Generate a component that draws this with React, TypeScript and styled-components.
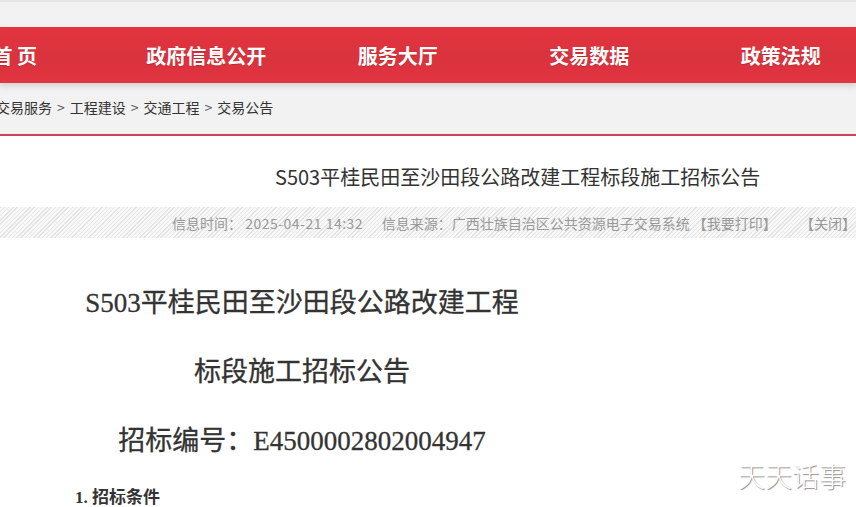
import React from "react";
import styled, { createGlobalStyle } from "styled-components";

const GlobalStyle = createGlobalStyle`
  html, body {
    margin: 0;
    padding: 0;
    background: #ffffff;
    overflow: hidden;
  }
  body {
    font-family: "Noto Sans CJK SC", "Noto Sans", sans-serif;
  }
`;

const Page = styled.div`
  position: relative;
  width: 856px;
  height: 507px;
  overflow: hidden;
  background: #ffffff;
`;

const Header = styled.header`
  background: #f2f2f2;
  border-top: 2px solid #e6e6e6;
  padding-top: 25px;
  border-bottom: 2px solid #c8465a;
  box-shadow: inset 0 -1px 0 #f6ecec;
`;

const NavBar = styled.nav`
  height: 56px;
  background: linear-gradient(180deg, #e3343f 0%, #d9333d 55%, #e23441 100%);
  box-shadow: 0 3px 6px rgba(0, 0, 0, 0.14);
  overflow: hidden;
`;

const NavList = styled.ul`
  display: grid;
  grid-template-columns: repeat(5, 191.5px);
  margin: 0 0 0 -81px;
  padding: 0;
  list-style: none;
  height: 100%;
`;

const NavItem = styled.li`
  display: flex;
  align-items: center;
  justify-content: center;
  color: #ffffff;
  font-size: 20px;
  font-weight: 700;
  white-space: pre;
  text-shadow: 0 1px 1px rgba(120, 0, 0, 0.25);
`;

const Crumbs = styled.div`
  height: 51px;
  padding-bottom: 3px;
  box-sizing: border-box;
  display: flex;
  align-items: center;
  margin-left: -4px;
  font-size: 14px;
  color: #333333;
  white-space: nowrap;
`;

const CrumbSep = styled.span`
  margin: 0 5px;
  color: #555555;
`;

const TitleRow = styled.h1`
  margin: 0;
  padding: 26px 0 15px 275px;
  font-size: 20px;
  line-height: 30px;
  font-weight: 400;
  color: #333333;
  white-space: nowrap;
`;

const MetaBar = styled.div`
  height: 31px;
  display: flex;
  align-items: center;
  padding-left: 172px;
  background: repeating-linear-gradient(
    135deg,
    #e4e4e4 0px,
    #e4e4e4 1px,
    #f8f8f8 1px,
    #f8f8f8 3px
  );
  font-size: 14px;
  color: #999999;
  white-space: pre;
  overflow: hidden;
`;

const MetaDate = styled.span`
  letter-spacing: 0.5px;
`;

const MetaGap = styled.span<{ $w: number }>`
  display: inline-block;
  width: ${(p) => p.$w}px;
`;

const Article = styled.article`
  margin-left: 75px;
  width: 454px;
  padding-top: 45px;
  font-family: "Liberation Serif", "Noto Sans CJK SC", serif;
  color: #333333;
`;

const Heading = styled.p<{ $gap: number }>`
  margin: 0 0 ${(p) => p.$gap}px;
  text-align: center;
  font-size: 27px;
  line-height: 40px;
  white-space: nowrap;
  -webkit-text-stroke: 0.3px #333333;
`;

const SubHeading = styled.p`
  margin: 0;
  font-size: 17px;
  line-height: 26px;
  font-weight: 700;
  white-space: nowrap;
`;

const Watermark = styled.div`
  position: absolute;
  right: 10px;
  top: 456px;
  font-size: 27px;
  font-weight: 300;
  color: #ffffff;
  text-shadow: 1px 1px 1px rgba(0, 0, 0, 0.45), -0.5px -0.5px 0 rgba(0, 0, 0, 0.08);
`;

const navItems = ["首 页", "政府信息公开", "服务大厅", "交易数据", "政策法规"];
const crumbs = ["交易服务", "工程建设", "交通工程", "交易公告"];

export default function App() {
  return (
    <Page>
      <GlobalStyle />
      <Header>
        <NavBar>
          <NavList>
            {navItems.map((item) => (
              <NavItem key={item}>{item}</NavItem>
            ))}
          </NavList>
        </NavBar>
        <Crumbs>
          {crumbs.map((c, i) => (
            <React.Fragment key={c}>
              {i > 0 && <CrumbSep>&gt;</CrumbSep>}
              <span>{c}</span>
            </React.Fragment>
          ))}
        </Crumbs>
      </Header>
      <TitleRow>S503平桂民田至沙田段公路改建工程标段施工招标公告</TitleRow>
      <MetaBar>
        <span>信息时间： </span>
        <MetaDate>2025-04-21 14:32</MetaDate>
        <MetaGap $w={20} />
        <span>信息来源：广西壮族自治区公共资源电子交易系统 【我要打印】</span>
        <MetaGap $w={25} />
        <span>【关闭】</span>
      </MetaBar>
      <Article>
        <Heading $gap={29}>S503平桂民田至沙田段公路改建工程</Heading>
        <Heading $gap={29}>标段施工招标公告</Heading>
        <Heading $gap={24}>招标编号：E4500002802004947</Heading>
        <SubHeading>1. 招标条件</SubHeading>
      </Article>
      <Watermark>天天话事</Watermark>
    </Page>
  );
}
